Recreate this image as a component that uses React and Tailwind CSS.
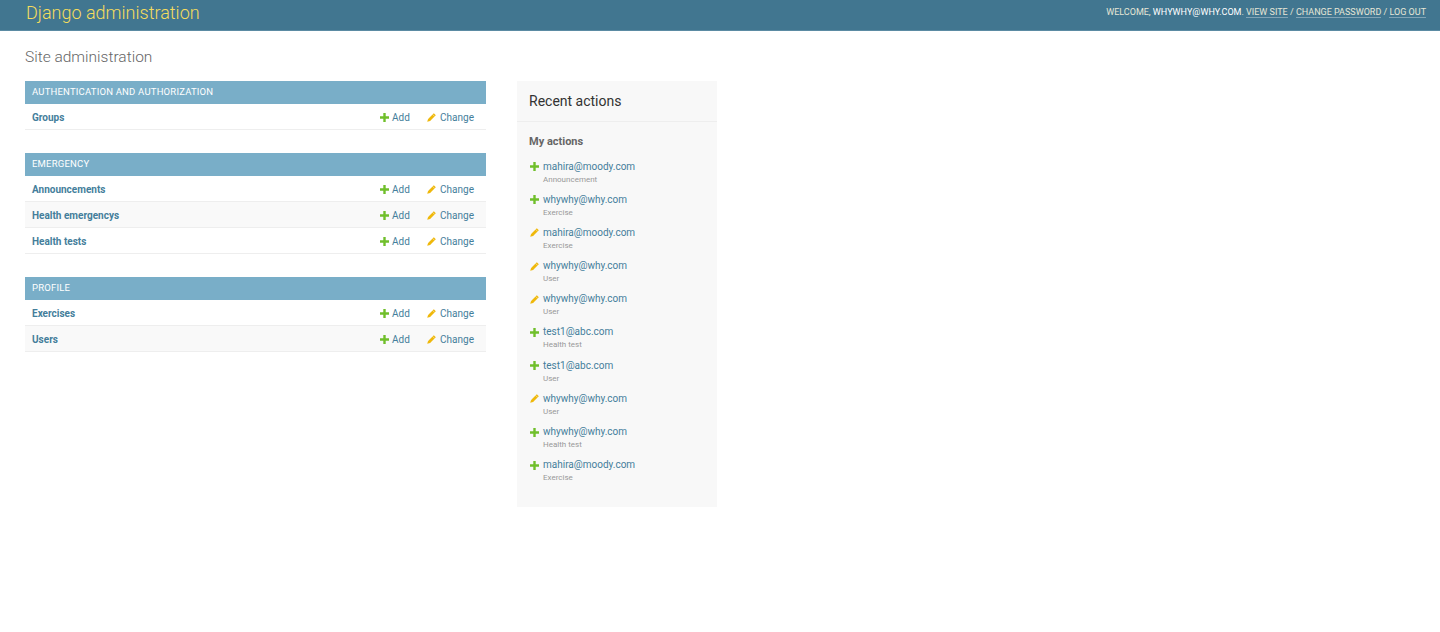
import React from "react";

const modules = [
  { name: "Authentication and Authorization", models: ["Groups"] },
  { name: "Emergency", models: ["Announcements", "Health emergencys", "Health tests"] },
  { name: "Profile", models: ["Exercises", "Users"] },
];

const actions = [
  ["add", "mahira@moody.com", "Announcement"],
  ["add", "whywhy@why.com", "Exercise"],
  ["change", "mahira@moody.com", "Exercise"],
  ["change", "whywhy@why.com", "User"],
  ["change", "whywhy@why.com", "User"],
  ["add", "test1@abc.com", "Health test"],
  ["add", "test1@abc.com", "User"],
  ["change", "whywhy@why.com", "User"],
  ["add", "whywhy@why.com", "Health test"],
  ["add", "mahira@moody.com", "Exercise"],
];

function PlusIcon() {
  return (
    <svg width="9" height="9" viewBox="0 0 9 9" className="shrink-0">
      <path d="M3.3 0h2.4v3.3H9v2.4H5.7V9H3.3V5.7H0V3.3h3.3z" fill="#70bf2b" />
    </svg>
  );
}

function PencilIcon() {
  return (
    <svg width="9" height="9" viewBox="0 0 9 9" className="shrink-0">
      <path d="M6.8 0.2l2 2L3.1 7.9 0.2 8.8 1.1 5.9z" fill="#efb80b" />
      <path d="M5.6 1.4l2 2" stroke="#f8f8f8" strokeWidth="0.5" />
    </svg>
  );
}

function Module({ name, models }) {
  return (
    <div className="mb-[23px]">
      <div className="h-[23px] bg-[#79aec8] text-white text-[9.5px] uppercase tracking-[0.2px] pl-[7px] flex items-center">
        {name}
      </div>
      {models.map((m, i) => (
        <div
          key={m}
          className={`h-[26px] flex items-center border-b border-[#eee] text-[10px] pl-[7px] pr-[12px] pt-px ${
            i % 2 === 1 ? "bg-[#f9f9f9]" : "bg-white"
          }`}
        >
          <span className="font-bold text-[#447e9b] flex-1">{m}</span>
          <span className="flex items-center gap-[3px] text-[#447e9b] w-[47px]">
            <PlusIcon />
            Add
          </span>
          <span className="flex items-center gap-[4px] text-[#447e9b]">
            <PencilIcon />
            Change
          </span>
        </div>
      ))}
    </div>
  );
}

export default function App() {
  return (
    <div className="min-h-[632px] bg-white font-['Roboto','Liberation_Sans',sans-serif] text-[#333]">
      <div className="h-[31px] bg-[#417690] border-b border-[#5b8ba3] flex items-center justify-between pl-[26px] pr-[14px]">
        <h1 className="text-[18px] font-light text-[#f5dd5d] leading-none -mt-[4px]">Django administration</h1>
        <div className="text-[9px] uppercase text-[#e6e6d6] -mt-[4px]">
          Welcome, <strong className="font-normal text-white">whywhy@why.com</strong>.{" "}
          <span className="border-b border-[#ffffff55]">View site</span> /{" "}
          <span className="border-b border-[#ffffff55]">Change password</span> /{" "}
          <span className="border-b border-[#ffffff55]">Log out</span>
        </div>
      </div>
      <div className="px-[25px] pt-[16px]">
        <h1 className="text-[15.5px] font-light text-[#666] leading-[20px] mb-[14px]">Site administration</h1>
        <div className="flex gap-[31px] items-start">
          <div className="w-[461px]">
            {modules.map((m) => (
              <Module key={m.name} {...m} />
            ))}
          </div>
          <div className="w-[200px] bg-[#f8f8f8] pb-[16px]">
            <h2 className="text-[14px] text-[#333] px-[12px] h-[41px] flex items-center border-b border-[#eee]">
              Recent actions
            </h2>
            <h3 className="text-[11px] font-bold text-[#666] px-[12px] pt-[12px] pb-[9px]">My actions</h3>
            <ul className="px-[13px]">
              {actions.map(([type, who, what], i) => (
                <li key={i} className="h-[33.2px]">
                  <div className="flex items-center gap-[4px] text-[10px] text-[#447e9b] leading-[14px]">
                    {type === "add" ? <PlusIcon /> : <PencilIcon />}
                    {who}
                  </div>
                  <div className="text-[8px] text-[#999] pl-[13px] leading-[12px]">{what}</div>
                </li>
              ))}
            </ul>
          </div>
        </div>
      </div>
    </div>
  );
}
